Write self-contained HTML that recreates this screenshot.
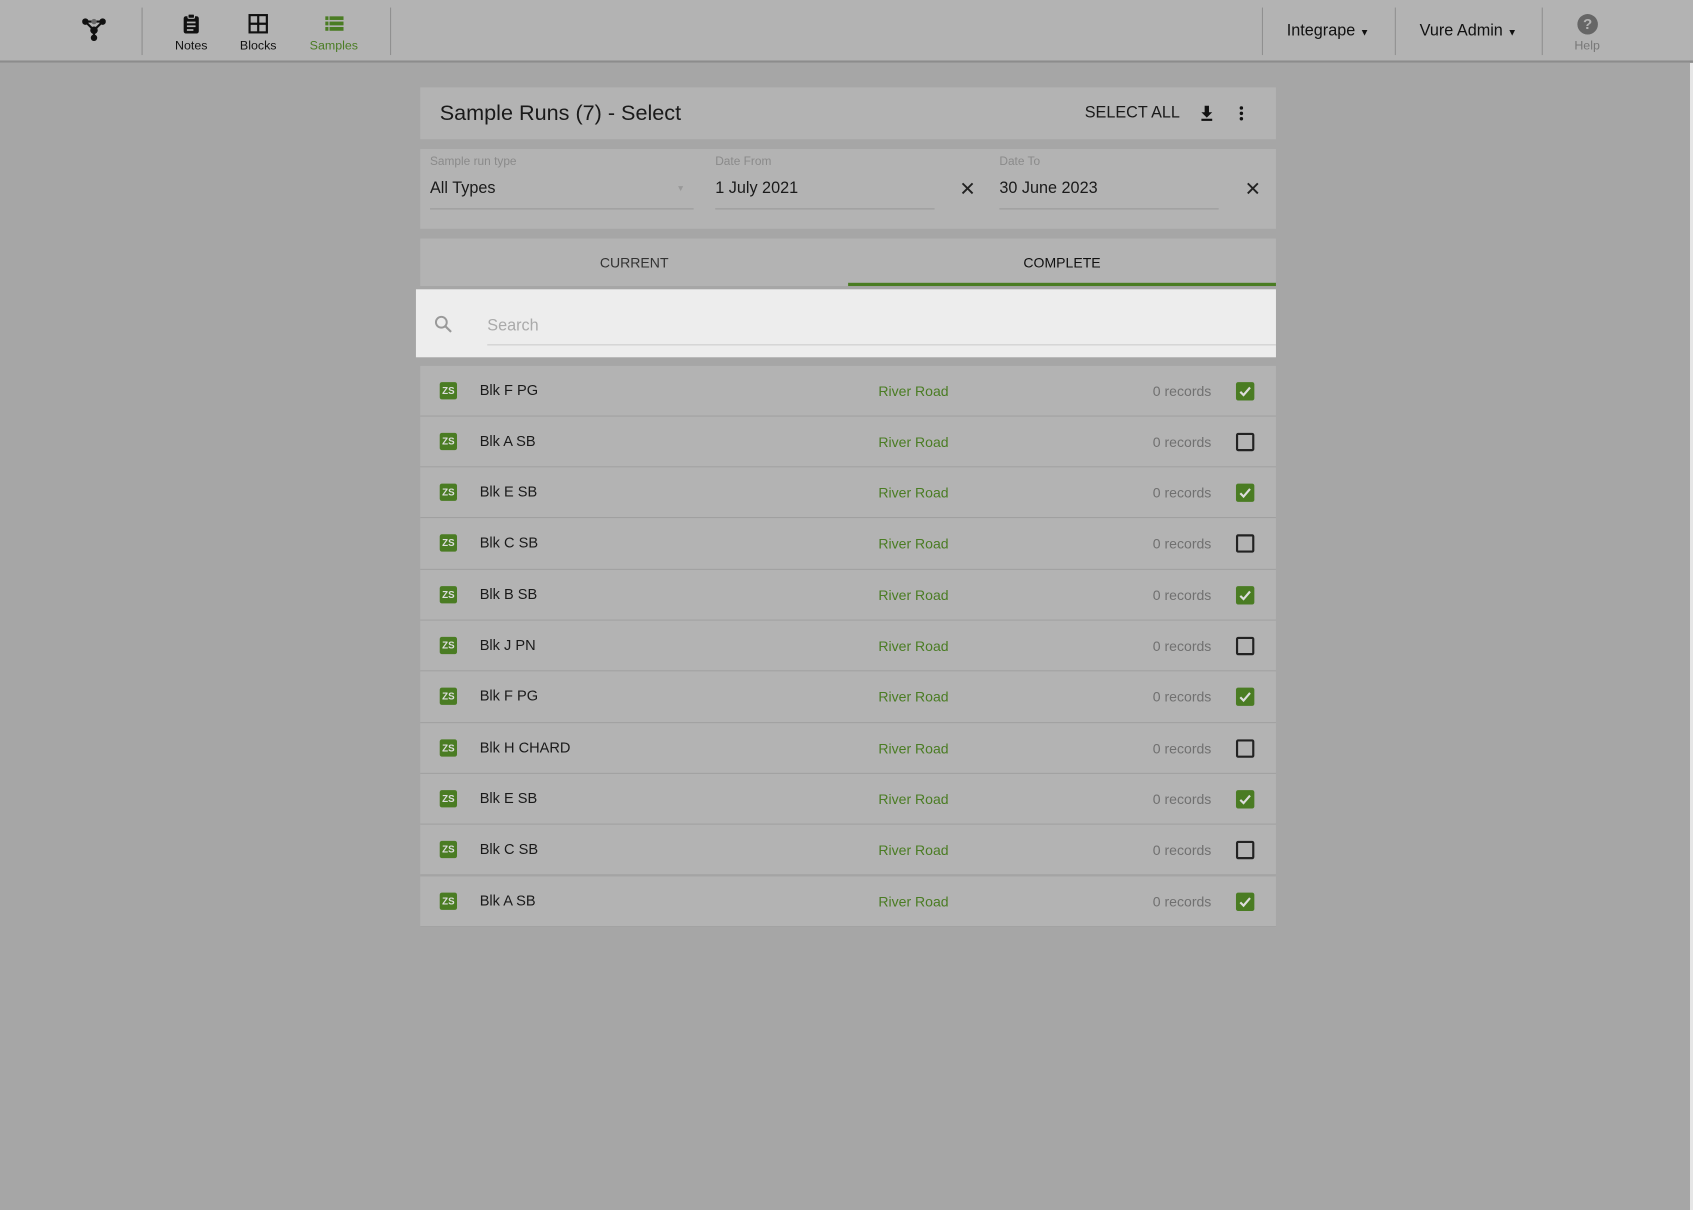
<!DOCTYPE html>
<html><head><meta charset="utf-8"><style>
*{box-sizing:border-box;margin:0;padding:0}
html,body{width:1693px;height:1210px;overflow:hidden;background:#a6a6a6;font-family:"Liberation Sans",Arial,sans-serif}
#w{position:absolute;left:0;top:0;width:1567px;height:1121px;transform:scale(1.0804,1.0794);transform-origin:0 0}
.abs{position:absolute}
.top{left:0;top:0;width:1570px;height:58px;background:#b3b3b3;border-bottom:2px solid #8c8c8c}
.vd{position:absolute;top:7px;height:44px;width:1px;background:#8f8f8f}
.nav{position:absolute;top:37px;font-size:11.5px;transform:translateX(-50%);color:#111}
.card{position:absolute;left:389px;width:792px;background:#b3b3b3}
.lbl{position:absolute;top:6px;font-size:11px;color:#8a8a8a}
.val{position:absolute;top:28px;font-size:15px;color:#1a1a1a}
.ul{position:absolute;top:55px;height:1px;background:#999}
.row{position:absolute;left:389px;width:792px;height:47.3px;background:#b3b3b3;border-bottom:1px solid #a0a0a0}
.zs{position:absolute;left:18px;top:15px;width:16px;height:16px;background:#4a7c23;border-radius:2px;color:#ddd;font-size:9px;font-weight:bold;text-align:center;line-height:16px}
.nm{position:absolute;left:55px;top:15px;font-size:13.5px;color:#1a1a1a}
.rr{position:absolute;left:424px;top:16px;font-size:13px;color:#4a7c23}
.rc{position:absolute;left:678px;top:16px;font-size:13px;color:#707070}
.cb{position:absolute;left:755px;top:15px;width:17px;height:17px;border-radius:2px}
.cb.off{border:2px solid #222}
.cb.on{background:#4a7c23}
</style></head><body><div id="w">
<div class="abs top">
 <svg class="abs" style="left:76px;top:16px" width="22" height="22" viewBox="0 0 22 22"><g fill="#111" stroke="#111" stroke-width="2"><line x1="3" y1="4" x2="19" y2="4"/><line x1="3" y1="4" x2="11" y2="12"/><line x1="19" y1="4" x2="11" y2="12"/><line x1="11" y1="12" x2="11" y2="19"/><circle cx="3" cy="4" r="2"/><circle cx="19" cy="4" r="2"/><circle cx="11" cy="12" r="2.5"/><circle cx="11" cy="19" r="2"/></g><circle cx="11" cy="4" r="2.5" fill="#666"/></svg>
 <div class="vd" style="left:131px"></div>
 <svg class="abs" style="left:169px;top:12px" width="16" height="20" viewBox="0 0 16 20"><rect x="1" y="3" width="14" height="16" rx="2" fill="#111"/><rect x="5" y="1" width="6" height="4" rx="1" fill="#111" stroke="#b3b3b3" stroke-width="1"/><rect x="4" y="8" width="8" height="1.6" fill="#b3b3b3"/><rect x="4" y="11.5" width="8" height="1.6" fill="#b3b3b3"/><rect x="4" y="15" width="6" height="1.6" fill="#b3b3b3"/></svg>
 <div class="nav" style="left:177px">Notes</div>
 <svg class="abs" style="left:230px;top:13px" width="18" height="18" viewBox="0 0 18 18"><rect x="1" y="1" width="16" height="16" fill="none" stroke="#111" stroke-width="2"/><line x1="9" y1="1" x2="9" y2="17" stroke="#111" stroke-width="2"/><line x1="1" y1="9" x2="17" y2="9" stroke="#111" stroke-width="2"/></svg>
 <div class="nav" style="left:239px">Blocks</div>
 <svg class="abs" style="left:301px;top:15px" width="17" height="14" viewBox="0 0 17 14"><g fill="#4a7c23"><rect x="0" y="0" width="3" height="3.5"/><rect x="4" y="0" width="13" height="3.5"/><rect x="0" y="5" width="3" height="3.5"/><rect x="4" y="5" width="13" height="3.5"/><rect x="0" y="10" width="3" height="3.5"/><rect x="4" y="10" width="13" height="3.5"/></g></svg>
 <div class="nav" style="left:309px;color:#4a7c23">Samples</div>
 <div class="vd" style="left:361px"></div>
 <div class="vd" style="left:1168px"></div>
 <div class="abs" style="left:1191px;top:20px;font-size:15px;color:#111">Integrape <span style="font-size:9px">&#9660;</span></div>
 <div class="vd" style="left:1291px"></div>
 <div class="abs" style="left:1314px;top:20px;font-size:15px;color:#111">Vure Admin <span style="font-size:9px">&#9660;</span></div>
 <div class="vd" style="left:1427px"></div>
 <div class="abs" style="left:1460px;top:13px;width:19px;height:19px;border-radius:50%;background:#666;color:#b3b3b3;font-weight:bold;font-size:14px;text-align:center;line-height:19px">?</div>
 <div class="nav" style="left:1469px;color:#777">Help</div>
</div>

<div class="card" style="top:81px;height:48px">
 <div class="abs" style="left:18px;top:13px;font-size:20px;color:#1a1a1a">Sample Runs (7) - Select</div>
 <div class="abs" style="left:615px;top:15px;font-size:15px;color:#1a1a1a">SELECT ALL</div>
 <svg class="abs" style="left:721px;top:16px" width="14" height="16" viewBox="0 0 14 16"><path d="M5 1h4v6h3l-5 5-5-5h3z" fill="#111"/><rect x="2" y="13" width="10" height="2" fill="#111"/></svg>
 <svg class="abs" style="left:757px;top:16px" width="6" height="16" viewBox="0 0 6 16"><circle cx="3" cy="3" r="1.6" fill="#111"/><circle cx="3" cy="8" r="1.6" fill="#111"/><circle cx="3" cy="13" r="1.6" fill="#111"/></svg>
</div>

<div class="card" style="top:138px;height:74px">
 <div class="lbl" style="left:9px">Sample run type</div><div class="val" style="left:9px">All Types</div>
 <div class="abs" style="left:237px;top:32px;font-size:8px;color:#999">&#9660;</div>
 <div class="ul" style="left:9px;width:244px"></div>
 <div class="lbl" style="left:273px">Date From</div><div class="val" style="left:273px">1 July 2021</div>
 <div class="ul" style="left:273px;width:203px"></div>
 <div class="abs" style="left:499px;top:27px;font-size:18px;color:#222">✕</div>
 <div class="lbl" style="left:536px">Date To</div><div class="val" style="left:536px">30 June 2023</div>
 <div class="ul" style="left:536px;width:203px"></div>
 <div class="abs" style="left:763px;top:27px;font-size:18px;color:#222">✕</div>
</div>

<div class="card" style="top:221px;height:44px">
 <div class="abs" style="left:0;width:396px;top:15px;text-align:center;font-size:13px;color:#333">CURRENT</div>
 <div class="abs" style="left:396px;width:396px;top:15px;text-align:center;font-size:13px;color:#111">COMPLETE</div>
 <div class="abs" style="left:396px;width:396px;top:41px;height:3px;background:#4a7c23"></div>
</div>

<div class="abs" style="left:385px;top:268px;width:796px;height:63px;background:#ededed">
 <svg class="abs" style="left:17px;top:24px" width="17" height="17" viewBox="0 0 17 17"><circle cx="6.5" cy="6.5" r="5" fill="none" stroke="#999" stroke-width="1.8"/><line x1="10" y1="10" x2="15.5" y2="15.5" stroke="#999" stroke-width="2"/></svg>
 <div class="abs" style="left:66px;top:25px;font-size:15px;color:#aaa">Search</div>
 <div class="abs" style="left:66px;top:51px;width:730px;height:1px;background:#ccc"></div>
</div>

<div class="row" style="top:338.5px"><div class="zs">ZS</div><div class="nm">Blk F PG</div><div class="rr">River Road</div><div class="rc">0 records</div><div class="cb on"><svg width="17" height="17"><path d="M4 9l3 3 6-7" fill="none" stroke="#ddd" stroke-width="2"/></svg></div></div>
<div class="row" style="top:385.8px"><div class="zs">ZS</div><div class="nm">Blk A SB</div><div class="rr">River Road</div><div class="rc">0 records</div><div class="cb off"></div></div>
<div class="row" style="top:433.1px"><div class="zs">ZS</div><div class="nm">Blk E SB</div><div class="rr">River Road</div><div class="rc">0 records</div><div class="cb on"><svg width="17" height="17"><path d="M4 9l3 3 6-7" fill="none" stroke="#ddd" stroke-width="2"/></svg></div></div>
<div class="row" style="top:480.4px"><div class="zs">ZS</div><div class="nm">Blk C SB</div><div class="rr">River Road</div><div class="rc">0 records</div><div class="cb off"></div></div>
<div class="row" style="top:527.7px"><div class="zs">ZS</div><div class="nm">Blk B SB</div><div class="rr">River Road</div><div class="rc">0 records</div><div class="cb on"><svg width="17" height="17"><path d="M4 9l3 3 6-7" fill="none" stroke="#ddd" stroke-width="2"/></svg></div></div>
<div class="row" style="top:575px"><div class="zs">ZS</div><div class="nm">Blk J PN</div><div class="rr">River Road</div><div class="rc">0 records</div><div class="cb off"></div></div>
<div class="row" style="top:622.3px"><div class="zs">ZS</div><div class="nm">Blk F PG</div><div class="rr">River Road</div><div class="rc">0 records</div><div class="cb on"><svg width="17" height="17"><path d="M4 9l3 3 6-7" fill="none" stroke="#ddd" stroke-width="2"/></svg></div></div>
<div class="row" style="top:669.6px"><div class="zs">ZS</div><div class="nm">Blk H CHARD</div><div class="rr">River Road</div><div class="rc">0 records</div><div class="cb off"></div></div>
<div class="row" style="top:716.9px"><div class="zs">ZS</div><div class="nm">Blk E SB</div><div class="rr">River Road</div><div class="rc">0 records</div><div class="cb on"><svg width="17" height="17"><path d="M4 9l3 3 6-7" fill="none" stroke="#ddd" stroke-width="2"/></svg></div></div>
<div class="row" style="top:764.2px"><div class="zs">ZS</div><div class="nm">Blk C SB</div><div class="rr">River Road</div><div class="rc">0 records</div><div class="cb off"></div></div>
<div class="row" style="top:811.5px"><div class="zs">ZS</div><div class="nm">Blk A SB</div><div class="rr">River Road</div><div class="rc">0 records</div><div class="cb on"><svg width="17" height="17"><path d="M4 9l3 3 6-7" fill="none" stroke="#ddd" stroke-width="2"/></svg></div></div>
</div>
<div style="position:absolute;left:1690px;top:63px;width:3px;height:1147px;background:#e6e6e6"></div>
</body></html>
